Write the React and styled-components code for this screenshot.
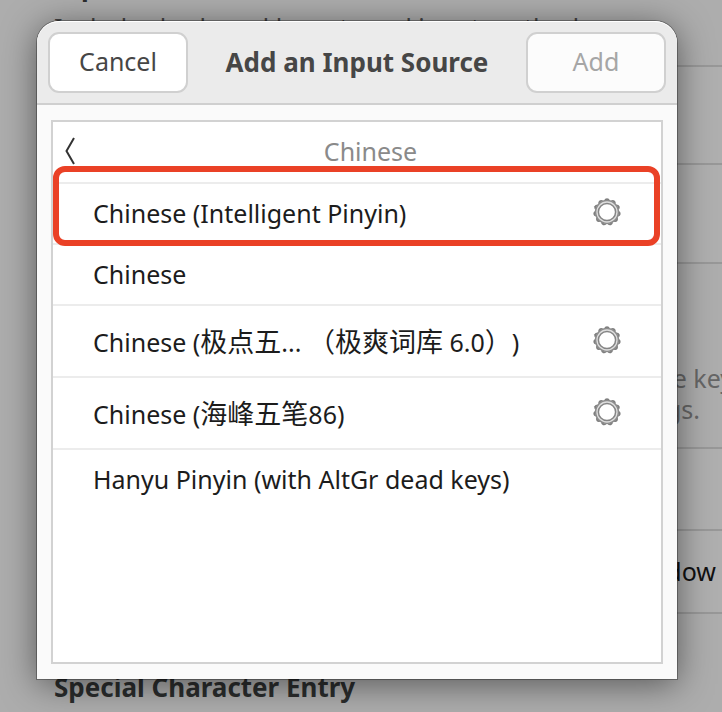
import React from 'react';
import styled, { createGlobalStyle } from 'styled-components';

const GlobalStyle = createGlobalStyle`
  * {
    box-sizing: border-box;
  }
  body {
    margin: 0;
    background: #adadad;
    font-family: 'Noto Sans', 'Noto Sans CJK SC', sans-serif;
    font-size: 25px;
    line-height: 30px;
    color: #1c1c1c;
  }
  button {
    font: inherit;
    color: inherit;
    cursor: pointer;
  }
`;

const Screen = styled.div`
  position: relative;
  min-height: 100vh;
  overflow: hidden;
`;

const Settings = styled.main`
  height: 100vh;
  margin-top: -29px;
  padding-left: 54px;
`;

const Heading = styled.h2`
  margin: 0;
  font-size: 26px;
  font-weight: 700;
  line-height: 30px;
  color: #2b2d2d;
`;

const Hint = styled.p`
  margin: 0;
  padding: 11px 0 23px;
  color: #444;
`;

const SideHint = styled.p`
  margin: 0 -11px 0 0;
  padding: 0 0 22px;
  color: #666;
  line-height: 31px;
  text-align: right;
  white-space: nowrap;
  span {
    display: block;
  }
  span + span {
    padding-right: 33px;
  }
`;

const Card = styled.div`
  margin-bottom: ${props => props.$gap};
  background: #afafaf;
  border-top: 2px solid #989898;
`;

const CardRow = styled.div`
  display: flex;
  align-items: center;
  justify-content: flex-end;
  height: ${props => props.$height};
  padding: 0 6px 2px 0;
  border-bottom: 2px solid #989898;
  color: #111;
  white-space: nowrap;
`;

const Overlay = styled.div`
  position: absolute;
  inset: 0;
  display: flex;
  padding: 21px 45px 33px 37px;
`;

const Dialog = styled.section`
  display: flex;
  flex: 1;
  flex-direction: column;
  min-width: 0;
  background: #fafafa;
  border-radius: 22px 22px 0 0;
  box-shadow: 0 0 0 1px rgba(0, 0, 0, 0.3), 0 5px 34px rgba(0, 0, 0, 0.5);
`;

const HeaderBar = styled.header`
  display: flex;
  align-items: center;
  justify-content: space-between;
  padding: 10px 11px;
  background: #ebebeb;
  border-top: 1px solid #fff;
  border-bottom: 2px solid #cfcfcf;
  border-radius: 22px 22px 0 0;
`;

const Title = styled.h1`
  margin: 0;
  padding-bottom: 2px;
  font-size: 26px;
  font-weight: 700;
  color: #464646;
`;

const HeaderButton = styled.button`
  width: 140px;
  height: 61px;
  padding: 0 0 3px;
  background: #fff;
  border: 2px solid #d0d0d0;
  border-radius: 11px;
  color: #464646;
  &:disabled {
    background: #fcfcfc;
    color: #a6a6a6;
    cursor: default;
  }
`;

const Content = styled.div`
  display: flex;
  flex: 1;
  padding: 15px 14px;
`;

const Panel = styled.div`
  flex: 1;
  min-width: 0;
  background: #fff;
  border: 2px solid #d2d2d2;
`;

const PanelHeader = styled.div`
  display: flex;
  align-items: center;
  height: 60px;
  padding-bottom: 2px;
`;

const BackButton = styled.button`
  display: flex;
  align-items: center;
  justify-content: flex-end;
  width: 27px;
  height: 58px;
  padding: 0 4px 0 0;
  background: none;
  border: 0;
`;

const PanelTitle = styled.h2`
  flex: 1;
  margin: 0;
  font-size: 25px;
  font-weight: 400;
  color: #8a8a8a;
  text-align: center;
`;

const SourceList = styled.ul`
  margin: 0;
  padding: 0;
  list-style: none;
`;

const SourceItem = styled.li`
  position: relative;
  border-top: 2px solid #ececec;
`;

const SourceButton = styled.button`
  display: flex;
  align-items: center;
  justify-content: space-between;
  width: 100%;
  height: ${props => (props.$tall ? '70px' : '59px')};
  padding: 0 39px 3px 40px;
  background: none;
  border: 0;
  text-align: left;
  white-space: nowrap;
`;

const SourceName = styled.span`
  padding-top: ${props => (props.$tall ? '4px' : '2px')};
`;

const Hanzi = styled.span`
  font-family: 'Noto Sans CJK SC', sans-serif;
  font-size: 27px;
  text-spacing-trim: space-all;
`;

const Highlight = styled.div`
  position: absolute;
  inset: -18px 1px -3px 0;
  z-index: 1;
  border: 6px solid #ea4126;
  border-radius: 12px;
  pointer-events: none;
`;

const teeth = Array.from({ length: 11 }, (_, i) => (i * 360) / 11);

const Gear = () => (
  <svg width="30" height="30" viewBox="-15 -15 30 30" aria-hidden="true">
    {teeth.map(angle => (
      <path
        key={angle}
        d="M-3 -11.4 Q-2 -13.8 0 -13.8 T3 -11.4 Z"
        fill="#7e7e7e"
        transform={`rotate(${angle})`}
      />
    ))}
    <circle r="10.2" fill="none" stroke="#dedede" strokeWidth="3" />
    <circle r="11.4" fill="none" stroke="#8c8c8c" strokeWidth="1.5" />
    <circle r="8.6" fill="#fff" stroke="#858585" strokeWidth="1.5" />
  </svg>
);

const sources = [
  { id: 'pinyin', label: 'Chinese (Intelligent Pinyin)', setup: true, marked: true },
  { id: 'chinese', label: 'Chinese' },
  {
    id: 'jidian',
    label: (
      <>
        Chinese (<Hanzi>极点五</Hanzi>... <Hanzi>（极爽词库</Hanzi> 6.0
        <Hanzi>）</Hanzi>)
      </>
    ),
    setup: true,
    tall: true,
  },
  {
    id: 'haifeng',
    label: (
      <>
        Chinese (<Hanzi>海峰五笔</Hanzi>86)
      </>
    ),
    setup: true,
    tall: true,
  },
  { id: 'hanyu', label: 'Hanyu Pinyin (with AltGr dead keys)' },
];

const KeyboardSettings = () => (
  <Settings>
    <Heading>Input Sources</Heading>
    <Hint>Includes keyboard layouts and input methods.</Hint>
    <Card $gap="99px">
      <CardRow $height="98px" />
      <CardRow $height="99px" />
    </Card>
    <SideHint>
      <span>the key</span>
      <span>settings.</span>
    </SideHint>
    <Card $gap="58px">
      <CardRow $height="82px" />
      <CardRow $height="83px">window</CardRow>
    </Card>
    <Heading>Special Character Entry</Heading>
  </Settings>
);

const AddSourceDialog = () => (
  <Dialog role="dialog" aria-labelledby="dialog-title">
    <HeaderBar>
      <HeaderButton type="button">Cancel</HeaderButton>
      <Title id="dialog-title">Add an Input Source</Title>
      <HeaderButton type="button" disabled>
        Add
      </HeaderButton>
    </HeaderBar>
    <Content>
      <Panel>
        <PanelHeader>
          <BackButton type="button" aria-label="Back">
            <svg width="12" height="28" viewBox="0 0 12 28" aria-hidden="true">
              <path d="M10 1 L2.5 14 L10 27" fill="none" stroke="#333" strokeWidth="2" />
            </svg>
          </BackButton>
          <PanelTitle>Chinese</PanelTitle>
        </PanelHeader>
        <SourceList>
          {sources.map(source => (
            <SourceItem key={source.id}>
              <SourceButton type="button" $tall={source.tall}>
                <SourceName $tall={source.tall}>{source.label}</SourceName>
                {source.setup && <Gear />}
              </SourceButton>
              {source.marked && <Highlight />}
            </SourceItem>
          ))}
        </SourceList>
      </Panel>
    </Content>
  </Dialog>
);

const App = () => (
  <Screen>
    <GlobalStyle />
    <KeyboardSettings />
    <Overlay>
      <AddSourceDialog />
    </Overlay>
  </Screen>
);

export default App;
